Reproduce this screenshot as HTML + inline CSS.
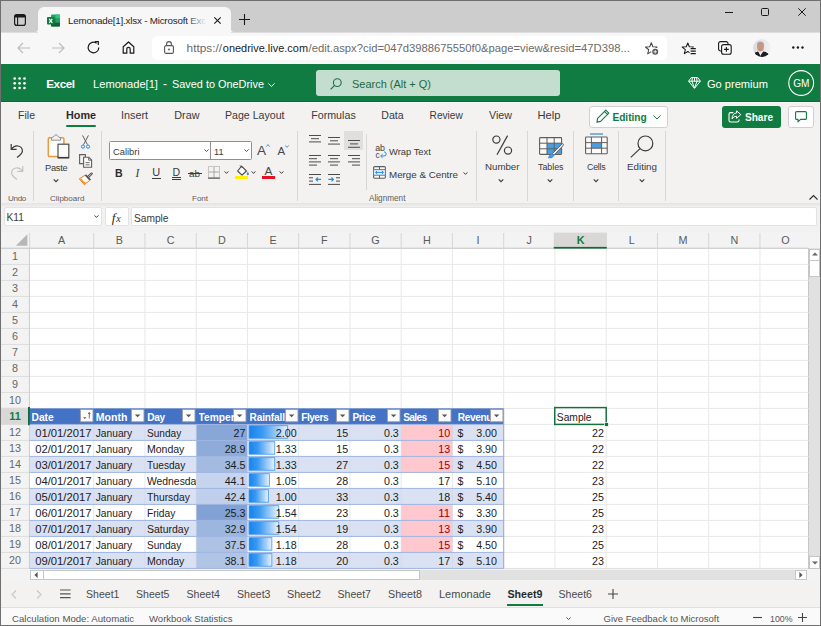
<!DOCTYPE html>
<html><head><meta charset="utf-8"><title>Lemonade[1].xlsx - Microsoft Excel Online</title>
<style>
html,body{margin:0;padding:0;}
body{width:821px;height:626px;overflow:hidden;background:#fff;font-family:"Liberation Sans",sans-serif;}
#root{position:relative;width:821px;height:626px;overflow:hidden;}
.a{position:absolute;box-sizing:border-box;display:block;}
.t{position:absolute;white-space:pre;display:block;line-height:20px;}
svg{overflow:visible;}
</style></head><body><div id="root">
<div class="a" style="left:0px;top:0px;width:821px;height:626px;background:#6f6f6f;"></div>
<div class="a" style="left:1px;top:1px;width:819px;height:32px;background:#cdcdcd;"></div>
<div class="a" style="left:1px;top:32px;width:819px;height:32px;background:#f7f7f7;"></div>
<div class="a" style="left:1px;top:32px;width:819px;height:1px;background:#dedede;"></div>
<div class="a" style="left:38px;top:7px;width:193px;height:26px;background:#f7f7f7;border-radius:6px 6px 0 0;"></div>
<svg class="a" style="left:35px;top:29px;" width="3" height="3" viewBox="0 0 3 3"><path d="M3 0 V3 H0 A3 3 0 0 0 3 0Z" fill="#f7f7f7"/></svg>
<svg class="a" style="left:231px;top:29px;" width="3" height="3" viewBox="0 0 3 3"><path d="M0 0 V3 H3 A3 3 0 0 1 0 0Z" fill="#f7f7f7"/></svg>
<svg class="a" style="left:14px;top:14px;" width="12" height="12" viewBox="0 0 12 12"><rect x="0.6" y="0.6" width="10.8" height="10.8" rx="2.2" fill="none" stroke="#1a1a1a" stroke-width="1.2"/><path d="M0.6 3.6 V2.6 A2 2 0 0 1 2.6 0.6 H9.4 A2 2 0 0 1 11.4 2.6 V3.6Z" fill="#1a1a1a"/><path d="M3.6 2 V11.4" stroke="#1a1a1a" stroke-width="1.1"/></svg>
<svg class="a" style="left:47px;top:13.6px;" width="13" height="13" viewBox="0 0 13 13"><rect x="4" y="0.5" width="9" height="12" rx="1" fill="#21a366"/>
<rect x="4" y="4.5" width="9" height="4" fill="#107c41"/><rect x="4" y="8.5" width="9" height="4" rx="0.8" fill="#185c37"/>
<rect x="8.5" y="0.5" width="4.5" height="4" fill="#33c481"/><rect x="8.5" y="4.5" width="4.5" height="4" fill="#21a366"/>
<rect x="0" y="3" width="7.5" height="7.5" rx="0.8" fill="#107c41"/>
<path d="M2.2 4.8 L5.3 8.8 M5.3 4.8 L2.2 8.8" stroke="#fff" stroke-width="1.2"/></svg>
<span class="t" style="left:68.00px;top:11px;font-size:9.8px;color:#1f1f1f;letter-spacing:-0.198px;">Lemonade[1].xlsx - Microsoft Exc</span>
<div class="a" style="left:186px;top:10px;width:22px;height:18px;background:linear-gradient(90deg,rgba(247,247,247,0),#f7f7f7 95%);"></div>
<svg class="a" style="left:214px;top:17px;" width="7" height="7" viewBox="0 0 7 7"><path d="M0.3 0.3 L6.7 6.7 M6.7 0.3 L0.3 6.7" stroke="#1a1a1a" stroke-width="1.1"/></svg>
<svg class="a" style="left:239px;top:14px;" width="11" height="11" viewBox="0 0 11 11"><path d="M5.5 0 V11 M0 5.5 H11" stroke="#1a1a1a" stroke-width="1.1"/></svg>
<svg class="a" style="left:725px;top:11.5px;" width="8" height="1" viewBox="0 0 8 1"><path d="M0 0.5 H8" stroke="#1a1a1a" stroke-width="1"/></svg>
<svg class="a" style="left:761px;top:8px;" width="8" height="8" viewBox="0 0 8 8"><rect x="0.5" y="0.5" width="7" height="7" rx="1" fill="none" stroke="#1a1a1a" stroke-width="1"/></svg>
<svg class="a" style="left:798px;top:8px;" width="8" height="8" viewBox="0 0 8 8"><path d="M0.3 0.3 L7.7 7.7 M7.7 0.3 L0.3 7.7" stroke="#1a1a1a" stroke-width="1"/></svg>
<svg class="a" style="left:17px;top:42px;" width="13" height="12" viewBox="0 0 13 12"><path d="M13 6 H1 M6 1 L1 6 L6 11" fill="none" stroke="#bdbdbd" stroke-width="1.2"/></svg>
<svg class="a" style="left:52px;top:42px;" width="13" height="12" viewBox="0 0 13 12"><path d="M0 6 H12 M7 1 L12 6 L7 11" fill="none" stroke="#bdbdbd" stroke-width="1.2"/></svg>
<svg class="a" style="left:87px;top:41px;" width="13" height="13" viewBox="0 0 13 13"><path d="M11.8 6.5 A5.3 5.3 0 1 1 9.6 2.2" fill="none" stroke="#1a1a1a" stroke-width="1.2"/><path d="M8 0.6 H11.3 V3.9" fill="none" stroke="#1a1a1a" stroke-width="1.2"/></svg>
<svg class="a" style="left:122px;top:41px;" width="13" height="13" viewBox="0 0 13 13"><path d="M1.2 5.8 L6.5 1 L11.8 5.8 V12.2 H8.2 V8 A1.7 1.7 0 0 0 4.8 8 V12.2 H1.2Z" fill="none" stroke="#1a1a1a" stroke-width="1.2" stroke-linejoin="round"/></svg>
<div class="a" style="left:152px;top:36px;width:515px;height:24px;background:#ffffff;border-radius:5px;"></div>
<svg class="a" style="left:164px;top:41px;" width="10" height="13" viewBox="0 0 10 13"><rect x="0.6" y="4.6" width="8.8" height="7.8" rx="1.5" fill="none" stroke="#555" stroke-width="1.1"/><path d="M2.6 4.6 V3 A2.4 2.4 0 0 1 7.4 3 V4.6" fill="none" stroke="#555" stroke-width="1.1"/><circle cx="5" cy="8.5" r="0.9" fill="#555"/></svg>
<span class="t" style="left:186.60px;top:38px;font-size:11.8px;color:#6b6b6b;">https://</span>
<span class="t" style="left:222.80px;top:38px;font-size:10.95px;color:#1a1a1a;letter-spacing:0.006px;">onedrive.live.com</span>
<span class="t" style="left:308.60px;top:38px;font-size:11.25px;color:#6b6b6b;">/edit.aspx?cid=047d3988675550f0&amp;page=view&amp;resid=47D398...</span>
<svg class="a" style="left:645px;top:42px;" width="14" height="13" viewBox="0 0 14 13"><path d="M6.30 0.80 L7.89 4.72 L12.10 5.01 L8.87 7.73 L9.89 11.84 L6.30 9.60 L2.71 11.84 L3.73 7.73 L0.50 5.01 L4.71 4.72Z" fill="none" stroke="#444" stroke-width="1.05" stroke-linejoin="round"/><circle cx="10.2" cy="9.8" r="4" fill="#fff"/><circle cx="10.2" cy="9.8" r="3" fill="#555"/><path d="M10.2 8.1 V11.5 M8.5 9.8 H11.9" stroke="#fff" stroke-width="0.9"/></svg>
<svg class="a" style="left:682px;top:42px;" width="14" height="13" viewBox="0 0 14 13"><path d="M5.80 1.00 L7.33 4.80 L11.41 5.08 L8.27 7.70 L9.27 11.67 L5.80 9.50 L2.33 11.67 L3.33 7.70 L0.19 5.08 L4.27 4.80Z" fill="none" stroke="#1a1a1a" stroke-width="1.05" stroke-linejoin="round"/><rect x="7.6" y="5.6" width="7" height="8" fill="#f7f7f7"/><path d="M8.6 6.6 H13.8 M8.6 9.1 H13.8 M8.6 11.6 H13.8" stroke="#1a1a1a" stroke-width="1.05"/></svg>
<svg class="a" style="left:718px;top:41px;" width="14" height="14" viewBox="0 0 14 14"><rect x="3.6" y="3.6" width="9.6" height="9.6" rx="2" fill="#f7f7f7" stroke="#1a1a1a" stroke-width="1.1"/><path d="M3.4 10 H2.6 A2 2 0 0 1 0.6 8 V2.6 A2 2 0 0 1 2.6 0.6 H8 A2 2 0 0 1 10 2.6 V3.4" fill="none" stroke="#1a1a1a" stroke-width="1.1"/><path d="M8.4 6 V10.8 M6 8.4 H10.8" stroke="#1a1a1a" stroke-width="1.1"/></svg>
<svg class="a" style="left:752.7px;top:38.8px;" width="18" height="18" viewBox="0 0 18 18"><defs><clipPath id="av"><circle cx="9" cy="9" r="9"/></clipPath><linearGradient id="avbg" x1="0" x2="1"><stop offset="0" stop-color="#dcdcdf"/><stop offset="1" stop-color="#f1f1f3"/></linearGradient></defs><g clip-path="url(#av)"><rect width="18" height="18" fill="url(#avbg)"/><path d="M-1 18 Q0.5 13.2 5 12.6 L7.6 15.6 L10.4 12.4 Q15.5 13 17.5 18Z" fill="#1c1c22"/><path d="M5.4 12.4 L7.4 17 L9.6 12.6Z" fill="#ececec"/><ellipse cx="7.5" cy="7.8" rx="3.5" ry="4.6" fill="#c9977f"/><path d="M3.9 7 Q3.6 2.6 7.6 2.4 Q11.4 2.6 11.1 7 Q10.4 4.4 7.5 4.5 Q4.6 4.4 3.9 7Z" fill="#a9a4a0"/><path d="M5.6 10.4 Q7.5 12.6 9.4 10.4 Q7.5 11.3 5.6 10.4Z" fill="#9a8a82"/></g></svg>
<svg class="a" style="left:792.4px;top:46.3px;" width="12" height="3" viewBox="0 0 12 3"><circle cx="1.3" cy="1.5" r="1.2" fill="#1a1a1a"/><circle cx="5.9" cy="1.5" r="1.2" fill="#1a1a1a"/><circle cx="10.5" cy="1.5" r="1.2" fill="#1a1a1a"/></svg>
<div class="a" style="left:1px;top:64px;width:819px;height:38px;background:#107c41;"></div>
<svg class="a" style="left:13px;top:76.6px;" width="13.2" height="12.8" viewBox="0 0 13.2 12.8"><circle cx="1.7" cy="1.5" r="1.35" fill="#fff"/><circle cx="1.7" cy="6.3" r="1.35" fill="#fff"/><circle cx="1.7" cy="11.0" r="1.35" fill="#fff"/><circle cx="6.6" cy="1.5" r="1.35" fill="#fff"/><circle cx="6.6" cy="6.3" r="1.35" fill="#fff"/><circle cx="6.6" cy="11.0" r="1.35" fill="#fff"/><circle cx="11.5" cy="1.5" r="1.35" fill="#fff"/><circle cx="11.5" cy="6.3" r="1.35" fill="#fff"/><circle cx="11.5" cy="11.0" r="1.35" fill="#fff"/></svg>
<span class="t" style="left:46.30px;top:74px;font-size:11.65px;color:#fff;font-weight:bold;letter-spacing:-0.449px;">Excel</span>
<span class="t" style="left:93.00px;top:74px;font-size:11.15px;color:#fff;letter-spacing:-0.008px;">Lemonade[1]</span>
<span class="t" style="left:163.00px;top:74px;font-size:12px;color:#fff;">-</span>
<span class="t" style="left:172.00px;top:74px;font-size:10.9px;color:#fff;letter-spacing:-0.005px;">Saved to OneDrive</span>
<svg class="a" style="left:268px;top:82.5px;" width="7" height="4" viewBox="0 0 7 4"><path d="M0.4 0.4 L3.5 3.4 L6.6 0.4" fill="none" stroke="#fff" stroke-width="1"/></svg>
<div class="a" style="left:316px;top:70px;width:244px;height:26px;background:#c3decf;border-radius:3px;"></div>
<svg class="a" style="left:330px;top:78px;" width="12" height="12" viewBox="0 0 12 12"><circle cx="7.3" cy="4.6" r="3.9" fill="none" stroke="#1e6e44" stroke-width="1.1"/><path d="M4.6 7.4 L0.6 11.4" stroke="#1e6e44" stroke-width="1.2"/></svg>
<span class="t" style="left:352.00px;top:74px;font-size:11px;color:#1d6a41;letter-spacing:-0.010px;">Search (Alt + Q)</span>
<svg class="a" style="left:687.6px;top:76.8px;" width="13" height="12" viewBox="0 0 13 12"><path d="M3.2 0.6 H9.8 L12.4 4.2 L6.5 11.4 L0.6 4.2 Z M0.6 4.2 H12.4 M4.4 0.8 L3.9 4.2 L6.5 11 L9.1 4.2 L8.6 0.8 M6.5 0.6 V4.2" fill="none" stroke="#fff" stroke-width="1" stroke-linejoin="round"/></svg>
<span class="t" style="left:707.00px;top:74px;font-size:11.1px;color:#fff;letter-spacing:-0.007px;">Go premium</span>
<svg class="a" style="left:788px;top:70px;" width="27" height="27" viewBox="0 0 27 27"><circle cx="13.2" cy="13" r="12.4" fill="none" stroke="#fff" stroke-width="1.1"/></svg>
<span class="t" style="left:793.25px;top:74px;font-size:10.1px;color:#fff;letter-spacing:0.015px;">GM</span>
<div class="a" style="left:1px;top:102px;width:819px;height:101px;background:#f3f2f1;"></div>
<div class="a" style="left:1px;top:101px;width:819px;height:1px;background:#0c6b38;"></div>
<div class="a" style="left:1px;top:102px;width:819px;height:1px;background:#fbfbfa;"></div>
<span class="t" style="left:18.00px;top:105px;font-size:10.55px;color:#3a3a3a;">File</span>
<span class="t" style="left:66.00px;top:105px;font-size:10.8px;color:#2b2b2b;font-weight:bold;">Home</span>
<span class="t" style="left:121.00px;top:105px;font-size:10.8px;color:#3a3a3a;">Insert</span>
<span class="t" style="left:174.30px;top:105px;font-size:10.8px;color:#3a3a3a;">Draw</span>
<span class="t" style="left:225.00px;top:105px;font-size:10.6px;color:#3a3a3a;letter-spacing:0.007px;">Page Layout</span>
<span class="t" style="left:311.20px;top:105px;font-size:10.7px;color:#3a3a3a;">Formulas</span>
<span class="t" style="left:381.30px;top:105px;font-size:10.55px;color:#3a3a3a;">Data</span>
<span class="t" style="left:429.60px;top:106px;font-size:10.15px;color:#3a3a3a;letter-spacing:-0.013px;">Review</span>
<span class="t" style="left:489.00px;top:105px;font-size:10.7px;color:#3a3a3a;">View</span>
<span class="t" style="left:537.40px;top:105px;font-size:11.2px;color:#3a3a3a;letter-spacing:-0.009px;">Help</span>
<div class="a" style="left:66px;top:125px;width:30px;height:2px;background:#107c41;border-radius:1px;"></div>
<div class="a" style="left:589px;top:106px;width:78.5px;height:21.5px;background:#fff;border:1px solid #d2d0ce;border-radius:3px;"></div>
<svg class="a" style="left:596px;top:109px;" width="14" height="14" viewBox="0 0 14 14"><path d="M9.8 1.2 L12.8 4.2 L4.6 12.4 L0.9 13.1 L1.6 9.4 Z M8.6 2.6 L11.4 5.4" fill="none" stroke="#107c41" stroke-width="1.1" stroke-linejoin="round"/></svg>
<span class="t" style="left:612.40px;top:108px;font-size:10.15px;color:#107c41;font-weight:bold;">Editing</span>
<svg class="a" style="left:653px;top:115px;" width="8" height="5" viewBox="0 0 8 5"><path d="M0.4 0.5 L4 4 L7.6 0.5" fill="none" stroke="#107c41" stroke-width="1"/></svg>
<div class="a" style="left:722px;top:106px;width:58.5px;height:21.5px;background:#107c41;border-radius:3px;"></div>
<svg class="a" style="left:728px;top:110px;" width="14" height="13" viewBox="0 0 14 13"><path d="M5.4 2.6 H2.6 A1.6 1.6 0 0 0 1 4.2 V10.4 A1.6 1.6 0 0 0 2.6 12 H9.4 A1.6 1.6 0 0 0 11 10.4 V9.6" fill="none" stroke="#fff" stroke-width="1.1"/><path d="M8.6 0.8 L12.8 4.6 L8.6 8.4 V6.2 Q5.2 6.2 4 9 Q4.2 3.4 8.6 3 Z" fill="none" stroke="#fff" stroke-width="1" stroke-linejoin="round"/></svg>
<span class="t" style="left:745.00px;top:108px;font-size:10.1px;color:#fff;font-weight:bold;letter-spacing:-0.014px;">Share</span>
<div class="a" style="left:787.6px;top:106px;width:26px;height:21.5px;background:#fff;border:1px solid #d2d0ce;border-radius:3px;"></div>
<svg class="a" style="left:795px;top:111px;" width="12" height="11.5" viewBox="0 0 12 11.5"><path d="M1.6 0.6 H10.4 A1 1 0 0 1 11.4 1.6 V7.4 A1 1 0 0 1 10.4 8.4 H5.6 L3 10.8 V8.4 H1.6 A1 1 0 0 1 0.6 7.4 V1.6 A1 1 0 0 1 1.6 0.6Z" fill="none" stroke="#107c41" stroke-width="1.1" stroke-linejoin="round"/></svg>
<div class="a" style="left:33px;top:131px;width:1px;height:70px;background:#d9d7d5;"></div>
<div class="a" style="left:101px;top:131px;width:1px;height:70px;background:#d9d7d5;"></div>
<div class="a" style="left:297px;top:131px;width:1px;height:70px;background:#d9d7d5;"></div>
<div class="a" style="left:476px;top:131px;width:1px;height:70px;background:#d9d7d5;"></div>
<div class="a" style="left:527px;top:131px;width:1px;height:70px;background:#d9d7d5;"></div>
<div class="a" style="left:573px;top:131px;width:1px;height:70px;background:#d9d7d5;"></div>
<div class="a" style="left:618px;top:131px;width:1px;height:70px;background:#d9d7d5;"></div>
<div class="a" style="left:665px;top:131px;width:1px;height:70px;background:#d9d7d5;"></div>
<span class="t" style="left:8.00px;top:189px;font-size:8.05px;color:#5c5c5c;letter-spacing:-0.311px;">Undo</span>
<span class="t" style="left:50.00px;top:189px;font-size:8.05px;color:#5c5c5c;">Clipboard</span>
<span class="t" style="left:192.00px;top:189px;font-size:8.05px;color:#5c5c5c;letter-spacing:-0.027px;">Font</span>
<span class="t" style="left:369.00px;top:189px;font-size:8.2px;color:#5c5c5c;">Alignment</span>
<svg class="a" style="left:10px;top:143px;" width="14" height="15" viewBox="0 0 14 15"><path d="M1.2 1 V6.4 H6.6" fill="none" stroke="#3b3b3b" stroke-width="1.2"/><path d="M1.4 6.2 Q4 2.4 8 3 Q12.6 4 12.4 8.2 Q12 11.2 7 14.4" fill="none" stroke="#3b3b3b" stroke-width="1.2"/></svg>
<svg class="a" style="left:10px;top:165px;" width="14" height="15" viewBox="0 0 14 15"><path d="M12.8 1 V6.4 H7.4" fill="none" stroke="#c4c2c0" stroke-width="1.2"/><path d="M12.6 6.2 Q10 2.4 6 3 Q1.4 4 1.6 8.2 Q2 11.2 7 14.4" fill="none" stroke="#c4c2c0" stroke-width="1.2"/></svg>
<svg class="a" style="left:47px;top:134px;" width="23" height="25" viewBox="0 0 23 25"><rect x="1.3" y="3.8" width="15.6" height="18.6" rx="1.2" fill="#fdfdfd" stroke="#ea9a3c" stroke-width="1.5"/>
<path d="M4.4 6.2 V3.4 H5.6 L9 0.6 L12.4 3.4 H13.6 V6.2Z" fill="#f3f2f1" stroke="#8a8886" stroke-width="0.9" stroke-linejoin="round"/>
<rect x="11" y="10.2" width="10.8" height="13.6" fill="#fbfbfb" stroke="#4f4d4b" stroke-width="1.2"/><path d="M11 23.6 H21.8" stroke="#3b3b3b" stroke-width="1.4"/></svg>
<span class="t" style="left:45.00px;top:158px;font-size:9.25px;color:#3a3a3a;letter-spacing:-0.231px;">Paste</span>
<svg class="a" style="left:53px;top:179px;" width="6" height="4" viewBox="0 0 6 4"><path d="M0.7 0.4 L3 2.7 L5.3 0.4" fill="none" stroke="#3b3b3b" stroke-width="1.1"/></svg>
<svg class="a" style="left:81px;top:135px;" width="9" height="14" viewBox="0 0 9 14"><path d="M1.6 0.4 L6.4 9.6 M7.4 0.4 L2.6 9.6" stroke="#605e5c" stroke-width="1"/><circle cx="2" cy="11.6" r="1.6" fill="none" stroke="#2a8ad4" stroke-width="1"/><circle cx="7" cy="11.6" r="1.6" fill="none" stroke="#2a8ad4" stroke-width="1"/></svg>
<svg class="a" style="left:79px;top:154px;" width="14" height="14" viewBox="0 0 14 14"><path d="M4 9.6 H0.6 V0.6 H6.4 V3" fill="none" stroke="#605e5c" stroke-width="1.1"/><path d="M4.6 3.2 H9.8 L12.6 6 V13.2 H4.6Z" fill="#fafafa" stroke="#605e5c" stroke-width="1.1"/><path d="M9.6 3.4 V6.2 H12.4 M6.6 8.6 H10.6 M6.6 10.8 H10.6" fill="none" stroke="#605e5c" stroke-width="0.9"/></svg>
<svg class="a" style="left:79px;top:172px;" width="14" height="14" viewBox="0 0 14 14"><path d="M0.3 6.8 L6 3.3 L10.7 8.4 L5.3 12.7 Z" fill="#fdfdfd" stroke="#e8730c" stroke-width="0.95" stroke-linejoin="round"/><path d="M1.2 7.3 L5.3 12 L6.8 10.8 Q3.8 9.8 2.6 6.5Z" fill="#f08a24"/><path d="M6.5 2.7 L11.4 8" stroke="#4a4846" stroke-width="1.4"/><path d="M9.3 4.9 L12.6 1.7" stroke="#4a4846" stroke-width="2.4" stroke-linecap="round"/><path d="M9.5 4.7 L12.4 1.9" stroke="#f3f2f1" stroke-width="0.8" stroke-linecap="round"/></svg>
<div class="a" style="left:108.5px;top:141.2px;width:143.4px;height:18.6px;background:#fff;border:1px solid #918f8d;border-radius:1.5px;"></div>
<div class="a" style="left:210px;top:142px;width:1px;height:17px;background:#918f8d;"></div>
<span class="t" style="left:113.00px;top:142px;font-size:9.35px;color:#3a3a3a;">Calibri</span>
<svg class="a" style="left:203.5px;top:149px;" width="5" height="3.2" viewBox="0 0 5 3.2"><path d="M0.4 0.4 L2.5 2.6 L4.6 0.4" fill="none" stroke="#444" stroke-width="0.9"/></svg>
<span class="t" style="left:214.00px;top:142px;font-size:9.15px;color:#3a3a3a;">11</span>
<svg class="a" style="left:244px;top:149px;" width="5" height="3.2" viewBox="0 0 5 3.2"><path d="M0.4 0.4 L2.5 2.6 L4.6 0.4" fill="none" stroke="#444" stroke-width="0.9"/></svg>
<span class="t" style="left:257.00px;top:141px;font-size:13.6px;color:#484848;">A</span>
<svg class="a" style="left:266px;top:144.3px;" width="4" height="3" viewBox="0 0 4 3"><path d="M0.3 2.6 L2 0.6 L3.7 2.6" fill="none" stroke="#2a8ad4" stroke-width="0.9"/></svg>
<span class="t" style="left:277.60px;top:141px;font-size:11.4px;color:#484848;">A</span>
<svg class="a" style="left:284.6px;top:144.6px;" width="4" height="3" viewBox="0 0 4 3"><path d="M0.3 0.4 L2 2.4 L3.7 0.4" fill="none" stroke="#2a8ad4" stroke-width="0.9"/></svg>
<span class="t" style="left:115.00px;top:163px;font-size:10.6px;color:#2b2b2b;font-weight:bold;">B</span>
<span class="t" style="left:135.50px;top:163px;font-size:11.5px;color:#3a3a3a;font-style:italic;font-family:'Liberation Serif',serif;">I</span>
<span class="t" style="left:152.30px;top:162px;font-size:11px;color:#3a3a3a;">U</span>
<div class="a" style="left:152px;top:178px;width:8.5px;height:1px;background:#3a3a3a;"></div>
<span class="t" style="left:172.60px;top:162px;font-size:10.6px;color:#3a3a3a;">D</span>
<div class="a" style="left:172px;top:177.4px;width:8.5px;height:0.9px;background:#3a3a3a;"></div>
<div class="a" style="left:172px;top:179.2px;width:8.5px;height:0.9px;background:#3a3a3a;"></div>
<span class="t" style="left:189.00px;top:164px;font-size:9.9px;color:#3a3a3a;letter-spacing:-0.006px;">ab</span>
<div class="a" style="left:187.5px;top:173px;width:14px;height:1px;background:#3a3a3a;"></div>
<svg class="a" style="left:208px;top:165.6px;" width="12" height="13" viewBox="0 0 12 13"><rect x="0.5" y="0.5" width="11" height="11" fill="none" stroke="#8f8d8b" stroke-width="0.9" stroke-dasharray="1 1"/><path d="M6 1 V11.5 M1 6 H11" stroke="#a09e9c" stroke-width="0.9"/><path d="M0 12.2 H12" stroke="#605e5c" stroke-width="1.2"/></svg>
<svg class="a" style="left:224px;top:171px;" width="5" height="3.2" viewBox="0 0 5 3.2"><path d="M0.6 0.4 L2.5 2.4 L4.4 0.4" fill="none" stroke="#3b3b3b" stroke-width="1"/></svg>
<svg class="a" style="left:235.6px;top:165px;" width="14" height="12" viewBox="0 0 14 12"><path d="M5.6 1.2 L10.4 6 L6 10.2 L1.6 6 Z" fill="#fafafa" stroke="#4a4a4a" stroke-width="1.1" stroke-linejoin="round"/><path d="M4 0.4 L6.6 3" stroke="#4a4a4a" stroke-width="1"/><path d="M11.8 6.4 Q13.4 8.8 12.6 9.8 Q11.8 10.6 11 9.8 Q10.4 8.8 11.8 6.4Z" fill="#2a8ad4"/></svg>
<div class="a" style="left:235px;top:176.2px;width:13px;height:3px;background:#fff100;"></div>
<svg class="a" style="left:251px;top:171px;" width="5" height="3.2" viewBox="0 0 5 3.2"><path d="M0.6 0.4 L2.5 2.4 L4.4 0.4" fill="none" stroke="#3b3b3b" stroke-width="1"/></svg>
<span class="t" style="left:264.60px;top:161px;font-size:11.8px;color:#484848;">A</span>
<div class="a" style="left:262.3px;top:176.2px;width:12.7px;height:3px;background:#e81123;"></div>
<svg class="a" style="left:278.5px;top:171px;" width="5" height="3.2" viewBox="0 0 5 3.2"><path d="M0.6 0.4 L2.5 2.4 L4.4 0.4" fill="none" stroke="#3b3b3b" stroke-width="1"/></svg>
<div class="a" style="left:344px;top:131px;width:19px;height:19px;background:#e1dfdd;"></div>
<svg class="a" style="left:309px;top:134.7px;" width="12" height="9.6" viewBox="0 0 12 9.6"><path d="M0.0 0.5 H12.0" stroke="#4a4a4a" stroke-width="1"/><path d="M2.0 3.7 H10.0" stroke="#4a4a4a" stroke-width="1"/><path d="M0.0 6.9 H12.0" stroke="#4a4a4a" stroke-width="1"/></svg>
<svg class="a" style="left:328px;top:136.9px;" width="12" height="9.9" viewBox="0 0 12 9.9"><path d="M0.0 0.5 H12.0" stroke="#4a4a4a" stroke-width="1"/><path d="M2.0 3.8 H10.0" stroke="#4a4a4a" stroke-width="1"/><path d="M0.0 7.1 H12.0" stroke="#4a4a4a" stroke-width="1"/></svg>
<svg class="a" style="left:347.5px;top:139.9px;" width="12" height="10.2" viewBox="0 0 12 10.2"><path d="M0.0 0.5 H12.0" stroke="#4a4a4a" stroke-width="1"/><path d="M2.0 3.9 H10.0" stroke="#4a4a4a" stroke-width="1"/><path d="M0.0 7.3 H12.0" stroke="#4a4a4a" stroke-width="1"/></svg>
<svg class="a" style="left:309px;top:154.5px;" width="12" height="12.8" viewBox="0 0 12 12.8"><path d="M0 0.5 H12" stroke="#4a4a4a" stroke-width="1"/><path d="M0 3.7 H8" stroke="#4a4a4a" stroke-width="1"/><path d="M0 6.9 H12" stroke="#4a4a4a" stroke-width="1"/><path d="M0 10.100000000000001 H8" stroke="#4a4a4a" stroke-width="1"/></svg>
<svg class="a" style="left:328px;top:154.5px;" width="12" height="12.8" viewBox="0 0 12 12.8"><path d="M0.0 0.5 H12.0" stroke="#4a4a4a" stroke-width="1"/><path d="M2.0 3.7 H10.0" stroke="#4a4a4a" stroke-width="1"/><path d="M0.0 6.9 H12.0" stroke="#4a4a4a" stroke-width="1"/><path d="M2.0 10.100000000000001 H10.0" stroke="#4a4a4a" stroke-width="1"/></svg>
<svg class="a" style="left:347.5px;top:154.5px;" width="12" height="12.8" viewBox="0 0 12 12.8"><path d="M0 0.5 H12" stroke="#4a4a4a" stroke-width="1"/><path d="M4 3.7 H12" stroke="#4a4a4a" stroke-width="1"/><path d="M0 6.9 H12" stroke="#4a4a4a" stroke-width="1"/><path d="M4 10.100000000000001 H12" stroke="#4a4a4a" stroke-width="1"/></svg>
<svg class="a" style="left:309px;top:174px;" width="13" height="12" viewBox="0 0 13 12"><path d="M0 0.5 H12 M0 3.8 H4 M0 7.1 H4 M0 10.4 H12" stroke="#4a4a4a" stroke-width="1"/><path d="M12 5.4 H7 M8.9 3.5 L7 5.4 L8.9 7.3" fill="none" stroke="#2a8ad4" stroke-width="1.1"/></svg>
<svg class="a" style="left:328px;top:174px;" width="13" height="12" viewBox="0 0 13 12"><path d="M0 0.5 H12 M8 3.8 H12 M8 7.1 H12 M0 10.4 H12" stroke="#4a4a4a" stroke-width="1"/><path d="M0.4 5.4 H5.4 M3.5 3.5 L5.4 5.4 L3.5 7.3" fill="none" stroke="#2a8ad4" stroke-width="1.1"/></svg>
<div class="a" style="left:366.3px;top:134px;width:1px;height:56px;background:#d9d7d5;"></div>
<span class="t" style="left:375.20px;top:138px;font-size:8.8px;color:#3a3a3a;letter-spacing:0.006px;">ab</span>
<span class="t" style="left:375.60px;top:146px;font-size:8.2px;color:#3a3a3a;">c</span>
<svg class="a" style="left:378.6px;top:151px;" width="8" height="7" viewBox="0 0 8 7"><path d="M2.2 5 H5 Q7.4 5 7.2 2.8 Q7 1 5 0.8" fill="none" stroke="#2a8ad4" stroke-width="1"/><path d="M3.6 3.2 L1.6 5 L3.6 6.8" fill="none" stroke="#2a8ad4" stroke-width="1"/></svg>
<span class="t" style="left:389.00px;top:142px;font-size:9.4px;color:#3a3a3a;">Wrap Text</span>
<svg class="a" style="left:373px;top:166px;" width="13" height="13" viewBox="0 0 13 13"><rect x="0.6" y="0.6" width="11.8" height="11.6" rx="1.2" fill="#f8f8f8" stroke="#605e5c" stroke-width="1.1"/><path d="M6.5 0.6 V12.2" stroke="#605e5c" stroke-width="1"/><rect x="0.6" y="3.6" width="11.8" height="5.6" fill="#eaf3fb" stroke="#2a8ad4" stroke-width="1"/><path d="M2.6 6.4 H10.4 M4.2 4.9 L2.6 6.4 L4.2 7.9 M8.8 4.9 L10.4 6.4 L8.8 7.9" fill="none" stroke="#2a8ad4" stroke-width="1"/></svg>
<span class="t" style="left:389.00px;top:165px;font-size:9.8px;color:#3a3a3a;letter-spacing:-0.012px;">Merge &amp; Centre</span>
<svg class="a" style="left:462.5px;top:171.5px;" width="5" height="3.2" viewBox="0 0 5 3.2"><path d="M0.6 0.4 L2.5 2.4 L4.4 0.4" fill="none" stroke="#3b3b3b" stroke-width="1"/></svg>
<svg class="a" style="left:492px;top:135px;" width="21" height="21" viewBox="0 0 21 21"><circle cx="4.4" cy="4.6" r="3.6" fill="none" stroke="#3b3b3b" stroke-width="1.2"/><circle cx="16" cy="15.6" r="3.6" fill="none" stroke="#3b3b3b" stroke-width="1.2"/><path d="M15.6 0.6 L5 19.8" stroke="#3b3b3b" stroke-width="1.2"/></svg>
<span class="t" style="left:485.00px;top:157px;font-size:9.7px;color:#3a3a3a;">Number</span>
<svg class="a" style="left:498.3px;top:179px;" width="6" height="4" viewBox="0 0 6 4"><path d="M0.7 0.4 L3 2.7 L5.3 0.4" fill="none" stroke="#3b3b3b" stroke-width="1.1"/></svg>
<svg class="a" style="left:539px;top:137px;" width="25" height="22" viewBox="0 0 25 22"><rect x="0.6" y="0.6" width="22" height="16.8" rx="0.8" fill="#fafafa" stroke="#605e5c" stroke-width="1.1"/><rect x="8" y="6.2" width="14.2" height="10.8" fill="#4a9de0"/><path d="M0.6 6.2 H22.6 M0.6 11.8 H22.6 M8 0.6 V17.4 M15.2 0.6 V17.4" stroke="#605e5c" stroke-width="1"/><path d="M23.6 6.4 L13.4 16.6 L15 18.2 L24.6 8Z" fill="#f3f2f1" stroke="#605e5c" stroke-width="0.9"/><path d="M13.2 16.6 Q10.4 17 9.4 21 Q13.6 21.6 15.2 18.4Z" fill="#4a9de0" stroke="#2f7fc4" stroke-width="0.6"/></svg>
<span class="t" style="left:538.00px;top:157px;font-size:8.9px;color:#3a3a3a;letter-spacing:-0.038px;">Tables</span>
<svg class="a" style="left:547.2px;top:179px;" width="6" height="4" viewBox="0 0 6 4"><path d="M0.7 0.4 L3 2.7 L5.3 0.4" fill="none" stroke="#3b3b3b" stroke-width="1.1"/></svg>
<svg class="a" style="left:585px;top:133px;" width="23" height="22" viewBox="0 0 23 22"><path d="M5 1 H18" stroke="#2a8ad4" stroke-width="1.2"/><rect x="0.6" y="4" width="21.6" height="16.8" rx="0.8" fill="#fafafa" stroke="#605e5c" stroke-width="1.1"/><rect x="6.4" y="9.6" width="10.2" height="5.6" fill="#4a9de0"/><path d="M0.6 9.6 H22.2 M0.6 15.2 H22.2 M6.4 4 V20.8 M16.6 4 V20.8" stroke="#605e5c" stroke-width="1"/></svg>
<span class="t" style="left:587.00px;top:157px;font-size:8.9px;color:#3a3a3a;letter-spacing:-0.256px;">Cells</span>
<svg class="a" style="left:592.8px;top:179px;" width="6" height="4" viewBox="0 0 6 4"><path d="M0.7 0.4 L3 2.7 L5.3 0.4" fill="none" stroke="#3b3b3b" stroke-width="1.1"/></svg>
<svg class="a" style="left:630px;top:135px;" width="24" height="23" viewBox="0 0 24 23"><circle cx="15.4" cy="8.4" r="7.4" fill="none" stroke="#3b3b3b" stroke-width="1.2"/><path d="M10 13.6 L0.8 22.4" stroke="#3b3b3b" stroke-width="1.2"/></svg>
<span class="t" style="left:627.00px;top:157px;font-size:9.8px;color:#3a3a3a;letter-spacing:0.005px;">Editing</span>
<svg class="a" style="left:638.6px;top:179px;" width="6" height="4" viewBox="0 0 6 4"><path d="M0.7 0.4 L3 2.7 L5.3 0.4" fill="none" stroke="#3b3b3b" stroke-width="1.1"/></svg>
<svg class="a" style="left:809px;top:194.5px;" width="9" height="5" viewBox="0 0 9 5"><path d="M0.5 4.5 L4.5 0.6 L8.5 4.5" fill="none" stroke="#2b2b2b" stroke-width="1.1"/></svg>
<div class="a" style="left:1px;top:203px;width:819px;height:45px;background:#f1f1f1;"></div>
<div class="a" style="left:1px;top:203px;width:819px;height:4px;background:linear-gradient(#e3e3e3,#f0f0f0);"></div>
<div class="a" style="left:3.5px;top:207.4px;width:98px;height:19px;background:#fff;border:1px solid #e3e3e3;border-radius:2px;"></div>
<div class="a" style="left:104.6px;top:207.4px;width:24px;height:19px;background:#fff;border:1px solid #e3e3e3;border-radius:2px;"></div>
<div class="a" style="left:131.4px;top:207.4px;width:685.6px;height:19px;background:#fff;border:1px solid #e3e3e3;border-radius:2px;"></div>
<span class="t" style="left:6.50px;top:208px;font-size:10.25px;color:#3a3a3a;letter-spacing:0.008px;">K11</span>
<svg class="a" style="left:93.5px;top:215.4px;" width="5" height="3.2" viewBox="0 0 5 3.2"><path d="M0.6 0.4 L2.5 2.4 L4.4 0.4" fill="none" stroke="#3b3b3b" stroke-width="1"/></svg>
<span class="t" style="left:111.80px;top:208px;font-size:13.5px;color:#2b2b2b;font-style:italic;font-family:'Liberation Serif',serif;">f</span>
<span class="t" style="left:116.20px;top:209px;font-size:10px;color:#2b2b2b;font-style:italic;font-family:'Liberation Serif',serif;">x</span>
<span class="t" style="left:134.00px;top:209px;font-size:10.2px;color:#3a3a3a;letter-spacing:-0.014px;">Sample</span>
<svg class="a" style="left:0;top:0" width="821" height="626" viewBox="0 0 821 626"><rect x="29.7" y="248.4" width="778.9" height="320.0" fill="#fff"/><rect x="1" y="232" width="819" height="16.400000000000006" fill="#f3f3f3"/><rect x="1" y="248.4" width="28.7" height="333.6" fill="#f3f3f3"/><rect x="553.75" y="232.6" width="53.05" height="15.800000000000011" fill="#dad8d6"/><rect x="1" y="407.79999999999995" width="28.7" height="16.8" fill="#dad8d6"/><path d="M27.4 234.2 V245.8 H15.8Z" fill="#b7b7b7"/><rect x="29.7" y="408.4" width="474.0" height="16.0" fill="#4472c4"/><rect x="29.7" y="424.4" width="474.0" height="16.0" fill="#d9e1f2"/><rect x="29.7" y="456.4" width="474.0" height="16.0" fill="#d9e1f2"/><rect x="29.7" y="488.4" width="474.0" height="16.0" fill="#d9e1f2"/><rect x="29.7" y="520.4" width="474.0" height="16.0" fill="#d9e1f2"/><rect x="29.7" y="552.4" width="474.0" height="16.0" fill="#d9e1f2"/><rect x="196.2" y="424.4" width="51.25" height="16.0" fill="#88a6d7"/><rect x="196.2" y="440.4" width="51.25" height="16.0" fill="#8fabda"/><rect x="196.2" y="456.4" width="51.25" height="16.0" fill="#a3bae1"/><rect x="196.2" y="472.4" width="51.25" height="16.0" fill="#c6d4ed"/><rect x="196.2" y="488.4" width="51.25" height="16.0" fill="#c0cfeb"/><rect x="196.2" y="504.4" width="51.25" height="16.0" fill="#82a1d5"/><rect x="196.2" y="520.4" width="51.25" height="16.0" fill="#9db6df"/><rect x="196.2" y="536.4" width="51.25" height="16.0" fill="#aec2e5"/><rect x="196.2" y="552.4" width="51.25" height="16.0" fill="#b0c4e5"/><rect x="401.2" y="424.4" width="51.25" height="16.0" fill="#ffc7ce"/><rect x="401.2" y="440.4" width="51.25" height="16.0" fill="#ffc7ce"/><rect x="401.2" y="456.4" width="51.25" height="16.0" fill="#ffc7ce"/><rect x="401.2" y="504.4" width="51.25" height="16.0" fill="#ffc7ce"/><rect x="401.2" y="520.4" width="51.25" height="16.0" fill="#ffc7ce"/><rect x="401.2" y="536.4" width="51.25" height="16.0" fill="#ffc7ce"/><path d="M29.7 264.4 H808.6" stroke="#e8e8e8" stroke-width="1"/><path d="M29.7 280.4 H808.6" stroke="#e8e8e8" stroke-width="1"/><path d="M29.7 296.4 H808.6" stroke="#e8e8e8" stroke-width="1"/><path d="M29.7 312.4 H808.6" stroke="#e8e8e8" stroke-width="1"/><path d="M29.7 328.4 H808.6" stroke="#e8e8e8" stroke-width="1"/><path d="M29.7 344.4 H808.6" stroke="#e8e8e8" stroke-width="1"/><path d="M29.7 360.4 H808.6" stroke="#e8e8e8" stroke-width="1"/><path d="M29.7 376.4 H808.6" stroke="#e8e8e8" stroke-width="1"/><path d="M29.7 392.4 H808.6" stroke="#e8e8e8" stroke-width="1"/><path d="M29.7 408.4 H808.6" stroke="#e8e8e8" stroke-width="1"/><path d="M29.7 424.4 H808.6" stroke="#e8e8e8" stroke-width="1"/><path d="M29.7 440.4 H808.6" stroke="#e8e8e8" stroke-width="1"/><path d="M29.7 456.4 H808.6" stroke="#e8e8e8" stroke-width="1"/><path d="M29.7 472.4 H808.6" stroke="#e8e8e8" stroke-width="1"/><path d="M29.7 488.4 H808.6" stroke="#e8e8e8" stroke-width="1"/><path d="M29.7 504.4 H808.6" stroke="#e8e8e8" stroke-width="1"/><path d="M29.7 520.4 H808.6" stroke="#e8e8e8" stroke-width="1"/><path d="M29.7 536.4 H808.6" stroke="#e8e8e8" stroke-width="1"/><path d="M29.7 552.4 H808.6" stroke="#e8e8e8" stroke-width="1"/><path d="M29.7 568.4 H808.6" stroke="#e8e8e8" stroke-width="1"/><path d="M93.7 248.4 V568.4" stroke="#e8e8e8" stroke-width="1"/><path d="M144.95 248.4 V568.4" stroke="#e8e8e8" stroke-width="1"/><path d="M196.2 248.4 V568.4" stroke="#e8e8e8" stroke-width="1"/><path d="M247.45 248.4 V568.4" stroke="#e8e8e8" stroke-width="1"/><path d="M298.7 248.4 V568.4" stroke="#e8e8e8" stroke-width="1"/><path d="M349.95 248.4 V568.4" stroke="#e8e8e8" stroke-width="1"/><path d="M401.2 248.4 V568.4" stroke="#e8e8e8" stroke-width="1"/><path d="M452.45 248.4 V568.4" stroke="#e8e8e8" stroke-width="1"/><path d="M503.7 248.4 V568.4" stroke="#e8e8e8" stroke-width="1"/><path d="M554.95 248.4 V568.4" stroke="#e8e8e8" stroke-width="1"/><path d="M606.2 248.4 V568.4" stroke="#e8e8e8" stroke-width="1"/><path d="M657.45 248.4 V568.4" stroke="#e8e8e8" stroke-width="1"/><path d="M708.7 248.4 V568.4" stroke="#e8e8e8" stroke-width="1"/><path d="M759.95 248.4 V568.4" stroke="#e8e8e8" stroke-width="1"/><path d="M1 264.4 H29.7" stroke="#dcdcdc" stroke-width="1"/><path d="M1 280.4 H29.7" stroke="#dcdcdc" stroke-width="1"/><path d="M1 296.4 H29.7" stroke="#dcdcdc" stroke-width="1"/><path d="M1 312.4 H29.7" stroke="#dcdcdc" stroke-width="1"/><path d="M1 328.4 H29.7" stroke="#dcdcdc" stroke-width="1"/><path d="M1 344.4 H29.7" stroke="#dcdcdc" stroke-width="1"/><path d="M1 360.4 H29.7" stroke="#dcdcdc" stroke-width="1"/><path d="M1 376.4 H29.7" stroke="#dcdcdc" stroke-width="1"/><path d="M1 392.4 H29.7" stroke="#dcdcdc" stroke-width="1"/><path d="M1 408.4 H29.7" stroke="#dcdcdc" stroke-width="1"/><path d="M1 424.4 H29.7" stroke="#dcdcdc" stroke-width="1"/><path d="M1 440.4 H29.7" stroke="#dcdcdc" stroke-width="1"/><path d="M1 456.4 H29.7" stroke="#dcdcdc" stroke-width="1"/><path d="M1 472.4 H29.7" stroke="#dcdcdc" stroke-width="1"/><path d="M1 488.4 H29.7" stroke="#dcdcdc" stroke-width="1"/><path d="M1 504.4 H29.7" stroke="#dcdcdc" stroke-width="1"/><path d="M1 520.4 H29.7" stroke="#dcdcdc" stroke-width="1"/><path d="M1 536.4 H29.7" stroke="#dcdcdc" stroke-width="1"/><path d="M1 552.4 H29.7" stroke="#dcdcdc" stroke-width="1"/><path d="M1 568.4 H29.7" stroke="#dcdcdc" stroke-width="1"/><path d="M29.7 233 V248.4" stroke="#d6d6d6" stroke-width="1"/><path d="M93.7 233 V248.4" stroke="#d6d6d6" stroke-width="1"/><path d="M144.95 233 V248.4" stroke="#d6d6d6" stroke-width="1"/><path d="M196.2 233 V248.4" stroke="#d6d6d6" stroke-width="1"/><path d="M247.45 233 V248.4" stroke="#d6d6d6" stroke-width="1"/><path d="M298.7 233 V248.4" stroke="#d6d6d6" stroke-width="1"/><path d="M349.95 233 V248.4" stroke="#d6d6d6" stroke-width="1"/><path d="M401.2 233 V248.4" stroke="#d6d6d6" stroke-width="1"/><path d="M452.45 233 V248.4" stroke="#d6d6d6" stroke-width="1"/><path d="M503.7 233 V248.4" stroke="#d6d6d6" stroke-width="1"/><path d="M554.95 233 V248.4" stroke="#d6d6d6" stroke-width="1"/><path d="M606.2 233 V248.4" stroke="#d6d6d6" stroke-width="1"/><path d="M657.45 233 V248.4" stroke="#d6d6d6" stroke-width="1"/><path d="M708.7 233 V248.4" stroke="#d6d6d6" stroke-width="1"/><path d="M759.95 233 V248.4" stroke="#d6d6d6" stroke-width="1"/><path d="M1 248.1 H808.6" stroke="#cfcfcf" stroke-width="1"/><path d="M29.4 248.4 V568.4" stroke="#cfcfcf" stroke-width="1"/><rect x="553.75" y="246.9" width="53.05" height="1.7" fill="#0e6b37"/><rect x="28.0" y="407.0" width="2.0" height="18.2" fill="#0e6b37"/><rect x="29.7" y="408.4" width="474.0" height="16.0" fill="#4472c4"/><rect x="30.2" y="424.4" width="473.5" height="16.0" fill="#d9e1f2"/><rect x="30.2" y="440.4" width="473.5" height="16.0" fill="#ffffff"/><rect x="30.2" y="456.4" width="473.5" height="16.0" fill="#d9e1f2"/><rect x="30.2" y="472.4" width="473.5" height="16.0" fill="#ffffff"/><rect x="30.2" y="488.4" width="473.5" height="16.0" fill="#d9e1f2"/><rect x="30.2" y="504.4" width="473.5" height="16.0" fill="#ffffff"/><rect x="30.2" y="520.4" width="473.5" height="16.0" fill="#d9e1f2"/><rect x="30.2" y="536.4" width="473.5" height="16.0" fill="#ffffff"/><rect x="30.2" y="552.4" width="473.5" height="16.0" fill="#d9e1f2"/><rect x="196.2" y="424.4" width="51.25" height="16.0" fill="#88a6d7"/><rect x="196.2" y="440.4" width="51.25" height="16.0" fill="#8fabda"/><rect x="196.2" y="456.4" width="51.25" height="16.0" fill="#a3bae1"/><rect x="196.2" y="472.4" width="51.25" height="16.0" fill="#c6d4ed"/><rect x="196.2" y="488.4" width="51.25" height="16.0" fill="#c0cfeb"/><rect x="196.2" y="504.4" width="51.25" height="16.0" fill="#82a1d5"/><rect x="196.2" y="520.4" width="51.25" height="16.0" fill="#9db6df"/><rect x="196.2" y="536.4" width="51.25" height="16.0" fill="#aec2e5"/><rect x="196.2" y="552.4" width="51.25" height="16.0" fill="#b0c4e5"/><rect x="401.2" y="424.4" width="51.25" height="16.0" fill="#ffc7ce"/><rect x="401.2" y="440.4" width="51.25" height="16.0" fill="#ffc7ce"/><rect x="401.2" y="456.4" width="51.25" height="16.0" fill="#ffc7ce"/><rect x="401.2" y="504.4" width="51.25" height="16.0" fill="#ffc7ce"/><rect x="401.2" y="520.4" width="51.25" height="16.0" fill="#ffc7ce"/><rect x="401.2" y="536.4" width="51.25" height="16.0" fill="#ffc7ce"/><path d="M93.7 424.4 V568.4" stroke="#cfd6e6" stroke-width="1" opacity="0.55"/><path d="M144.95 424.4 V568.4" stroke="#cfd6e6" stroke-width="1" opacity="0.55"/><path d="M196.2 424.4 V568.4" stroke="#cfd6e6" stroke-width="1" opacity="0.55"/><path d="M247.45 424.4 V568.4" stroke="#cfd6e6" stroke-width="1" opacity="0.55"/><path d="M298.7 424.4 V568.4" stroke="#cfd6e6" stroke-width="1" opacity="0.55"/><path d="M349.95 424.4 V568.4" stroke="#cfd6e6" stroke-width="1" opacity="0.55"/><path d="M401.2 424.4 V568.4" stroke="#cfd6e6" stroke-width="1" opacity="0.55"/><path d="M452.45 424.4 V568.4" stroke="#cfd6e6" stroke-width="1" opacity="0.55"/><path d="M29.7 424.4 H503.7" stroke="#9db4e0" stroke-width="1"/><path d="M29.7 440.4 H503.7" stroke="#9db4e0" stroke-width="1"/><path d="M29.7 456.4 H503.7" stroke="#9db4e0" stroke-width="1"/><path d="M29.7 472.4 H503.7" stroke="#9db4e0" stroke-width="1"/><path d="M29.7 488.4 H503.7" stroke="#9db4e0" stroke-width="1"/><path d="M29.7 504.4 H503.7" stroke="#9db4e0" stroke-width="1"/><path d="M29.7 520.4 H503.7" stroke="#9db4e0" stroke-width="1"/><path d="M29.7 536.4 H503.7" stroke="#9db4e0" stroke-width="1"/><path d="M29.7 552.4 H503.7" stroke="#9db4e0" stroke-width="1"/><path d="M29.7 568.4 H503.7" stroke="#9db4e0" stroke-width="1"/><path d="M503.7 408.4 V568.4" stroke="#8ea9db" stroke-width="1"/><defs><linearGradient id="db" x1="0" x2="1" y1="0" y2="0"><stop offset="0" stop-color="#1683ec"/><stop offset="0.35" stop-color="#3b9af2"/><stop offset="1" stop-color="#e9f3fd"/></linearGradient></defs><rect x="249.04999999999998" y="425.7" width="38.6" height="12.5" fill="url(#db)" stroke="#3b97ee" stroke-width="0.8"/><rect x="249.04999999999998" y="441.7" width="25.7" height="12.5" fill="url(#db)" stroke="#3b97ee" stroke-width="0.8"/><rect x="249.04999999999998" y="457.7" width="25.7" height="12.5" fill="url(#db)" stroke="#3b97ee" stroke-width="0.8"/><rect x="249.04999999999998" y="473.7" width="20.3" height="12.5" fill="url(#db)" stroke="#3b97ee" stroke-width="0.8"/><rect x="249.04999999999998" y="489.7" width="19.3" height="12.5" fill="url(#db)" stroke="#3b97ee" stroke-width="0.8"/><rect x="249.04999999999998" y="505.7" width="29.7" height="12.5" fill="url(#db)" stroke="#3b97ee" stroke-width="0.8"/><rect x="249.04999999999998" y="521.6999999999999" width="29.7" height="12.5" fill="url(#db)" stroke="#3b97ee" stroke-width="0.8"/><rect x="249.04999999999998" y="537.6999999999999" width="22.8" height="12.5" fill="url(#db)" stroke="#3b97ee" stroke-width="0.8"/><rect x="249.04999999999998" y="553.6999999999999" width="22.8" height="12.5" fill="url(#db)" stroke="#3b97ee" stroke-width="0.8"/><rect x="554.75" y="407.59999999999997" width="51.45" height="16.8" fill="#fff" stroke="#15703d" stroke-width="1.5"/><rect x="604.6" y="422.59999999999997" width="3.8" height="3.8" fill="#15703d" stroke="#fff" stroke-width="0.7"/></svg>
<svg class="a" style="left:79.6px;top:409.4px;" width="13.4" height="13.2" viewBox="0 0 13.4 13.2"><rect x="0.4" y="0.4" width="12.6" height="12.4" fill="#fdfdfd" stroke="#9c9a97" stroke-width="0.9"/><path d="M3.1 8.3 H6.5 L4.8 10Z" fill="#555"/><path d="M9.3 9.4 V3.6 M8.2 5 L9.3 3.4 L10.4 5" fill="none" stroke="#555" stroke-width="0.8"/></svg>
<svg class="a" style="left:130.85px;top:409.4px;" width="13.4" height="13.2" viewBox="0 0 13.4 13.2"><rect x="0.4" y="0.4" width="12.6" height="12.4" fill="#fdfdfd" stroke="#9c9a97" stroke-width="0.9"/><path d="M3.9 5.4 H9.3 L6.6 8.2Z" fill="#555"/></svg>
<svg class="a" style="left:182.1px;top:409.4px;" width="13.4" height="13.2" viewBox="0 0 13.4 13.2"><rect x="0.4" y="0.4" width="12.6" height="12.4" fill="#fdfdfd" stroke="#9c9a97" stroke-width="0.9"/><path d="M3.9 5.4 H9.3 L6.6 8.2Z" fill="#555"/></svg>
<svg class="a" style="left:233.35px;top:409.4px;" width="13.4" height="13.2" viewBox="0 0 13.4 13.2"><rect x="0.4" y="0.4" width="12.6" height="12.4" fill="#fdfdfd" stroke="#9c9a97" stroke-width="0.9"/><path d="M3.9 5.4 H9.3 L6.6 8.2Z" fill="#555"/></svg>
<svg class="a" style="left:284.6px;top:409.4px;" width="13.4" height="13.2" viewBox="0 0 13.4 13.2"><rect x="0.4" y="0.4" width="12.6" height="12.4" fill="#fdfdfd" stroke="#9c9a97" stroke-width="0.9"/><path d="M3.9 5.4 H9.3 L6.6 8.2Z" fill="#555"/></svg>
<svg class="a" style="left:335.85px;top:409.4px;" width="13.4" height="13.2" viewBox="0 0 13.4 13.2"><rect x="0.4" y="0.4" width="12.6" height="12.4" fill="#fdfdfd" stroke="#9c9a97" stroke-width="0.9"/><path d="M3.9 5.4 H9.3 L6.6 8.2Z" fill="#555"/></svg>
<svg class="a" style="left:387.1px;top:409.4px;" width="13.4" height="13.2" viewBox="0 0 13.4 13.2"><rect x="0.4" y="0.4" width="12.6" height="12.4" fill="#fdfdfd" stroke="#9c9a97" stroke-width="0.9"/><path d="M3.9 5.4 H9.3 L6.6 8.2Z" fill="#555"/></svg>
<svg class="a" style="left:438.35px;top:409.4px;" width="13.4" height="13.2" viewBox="0 0 13.4 13.2"><rect x="0.4" y="0.4" width="12.6" height="12.4" fill="#fdfdfd" stroke="#9c9a97" stroke-width="0.9"/><path d="M3.9 5.4 H9.3 L6.6 8.2Z" fill="#555"/></svg>
<svg class="a" style="left:489.6px;top:409.4px;" width="13.4" height="13.2" viewBox="0 0 13.4 13.2"><rect x="0.4" y="0.4" width="12.6" height="12.4" fill="#fdfdfd" stroke="#9c9a97" stroke-width="0.9"/><path d="M3.9 5.4 H9.3 L6.6 8.2Z" fill="#555"/></svg>
<span class="t" style="left:58.10px;top:230px;font-size:10.8px;color:#5a5a5a;">A</span>
<span class="t" style="left:115.72px;top:230px;font-size:10.8px;color:#5a5a5a;">B</span>
<span class="t" style="left:166.68px;top:230px;font-size:10.8px;color:#5a5a5a;">C</span>
<span class="t" style="left:217.93px;top:230px;font-size:10.8px;color:#5a5a5a;">D</span>
<span class="t" style="left:269.47px;top:230px;font-size:10.8px;color:#5a5a5a;">E</span>
<span class="t" style="left:321.03px;top:230px;font-size:10.8px;color:#5a5a5a;">F</span>
<span class="t" style="left:371.37px;top:230px;font-size:10.8px;color:#5a5a5a;">G</span>
<span class="t" style="left:422.93px;top:230px;font-size:10.8px;color:#5a5a5a;">H</span>
<span class="t" style="left:476.57px;top:230px;font-size:10.8px;color:#5a5a5a;">I</span>
<span class="t" style="left:526.62px;top:230px;font-size:10.8px;color:#5a5a5a;">J</span>
<span class="t" style="left:576.68px;top:230px;font-size:10.8px;color:#107c41;font-weight:bold;">K</span>
<span class="t" style="left:628.82px;top:230px;font-size:10.8px;color:#5a5a5a;">L</span>
<span class="t" style="left:678.58px;top:230px;font-size:10.8px;color:#5a5a5a;">M</span>
<span class="t" style="left:730.43px;top:230px;font-size:10.8px;color:#5a5a5a;">N</span>
<span class="t" style="left:781.27px;top:230px;font-size:10.8px;color:#5a5a5a;">O</span>
<span class="t" style="left:12.00px;top:246px;font-size:10.8px;color:#666;">1</span>
<span class="t" style="left:12.00px;top:262px;font-size:10.8px;color:#666;">2</span>
<span class="t" style="left:12.00px;top:278px;font-size:10.8px;color:#666;">3</span>
<span class="t" style="left:12.00px;top:294px;font-size:10.8px;color:#666;">4</span>
<span class="t" style="left:12.00px;top:310px;font-size:10.8px;color:#666;">5</span>
<span class="t" style="left:12.00px;top:326px;font-size:10.8px;color:#666;">6</span>
<span class="t" style="left:12.00px;top:342px;font-size:10.8px;color:#666;">7</span>
<span class="t" style="left:12.00px;top:358px;font-size:10.8px;color:#666;">8</span>
<span class="t" style="left:12.00px;top:374px;font-size:10.8px;color:#666;">9</span>
<span class="t" style="left:8.99px;top:390px;font-size:10.8px;color:#666;">10</span>
<span class="t" style="left:9.29px;top:406px;font-size:10.8px;color:#107c41;font-weight:bold;">11</span>
<span class="t" style="left:8.99px;top:422px;font-size:10.8px;color:#666;">12</span>
<span class="t" style="left:8.99px;top:438px;font-size:10.8px;color:#666;">13</span>
<span class="t" style="left:8.99px;top:454px;font-size:10.8px;color:#666;">14</span>
<span class="t" style="left:8.99px;top:470px;font-size:10.8px;color:#666;">15</span>
<span class="t" style="left:8.99px;top:486px;font-size:10.8px;color:#666;">16</span>
<span class="t" style="left:8.99px;top:502px;font-size:10.8px;color:#666;">17</span>
<span class="t" style="left:8.99px;top:518px;font-size:10.8px;color:#666;">18</span>
<span class="t" style="left:8.99px;top:534px;font-size:10.8px;color:#666;">19</span>
<span class="t" style="left:8.99px;top:550px;font-size:10.8px;color:#666;">20</span>
<div class="a" style="left:31.5px;top:408px;width:48.5px;height:17px;overflow:hidden;">
<span class="t" style="left:0.00px;top:0px;font-size:10.25px;color:#fff;font-weight:bold;">Date</span>
</div>
<div class="a" style="left:95.8px;top:408px;width:35.5px;height:17px;overflow:hidden;">
<span class="t" style="left:0.00px;top:-1px;font-size:10.55px;color:#fff;font-weight:bold;letter-spacing:-0.007px;">Month</span>
</div>
<div class="a" style="left:147.3px;top:408px;width:35.2px;height:17px;overflow:hidden;">
<span class="t" style="left:0.00px;top:0px;font-size:10.15px;color:#fff;font-weight:bold;letter-spacing:-0.373px;">Day</span>
</div>
<div class="a" style="left:198.6px;top:408px;width:35.2px;height:17px;overflow:hidden;">
<span class="t" style="left:0.00px;top:0px;font-size:10.2px;color:#fff;font-weight:bold;">Temperature</span>
</div>
<div class="a" style="left:249.5px;top:408px;width:35.5px;height:17px;overflow:hidden;">
<span class="t" style="left:0.00px;top:0px;font-size:10.15px;color:#fff;font-weight:bold;letter-spacing:-0.145px;">Rainfall</span>
</div>
<div class="a" style="left:301.2px;top:408px;width:35.1px;height:17px;overflow:hidden;">
<span class="t" style="left:0.00px;top:0px;font-size:10.15px;color:#fff;font-weight:bold;letter-spacing:-0.484px;">Flyers</span>
</div>
<div class="a" style="left:352.4px;top:408px;width:35.1px;height:17px;overflow:hidden;">
<span class="t" style="left:0.00px;top:0px;font-size:10.15px;color:#fff;font-weight:bold;letter-spacing:-0.406px;">Price</span>
</div>
<div class="a" style="left:403.2px;top:408px;width:35.6px;height:17px;overflow:hidden;">
<span class="t" style="left:0.00px;top:0px;font-size:10.15px;color:#fff;font-weight:bold;letter-spacing:-0.625px;">Sales</span>
</div>
<div class="a" style="left:457.8px;top:408px;width:32.2px;height:17px;overflow:hidden;">
<span class="t" style="left:0.00px;top:0px;font-size:10.15px;color:#fff;font-weight:bold;letter-spacing:-0.401px;">Revenue</span>
</div>
<span class="t" style="left:35.20px;top:423px;font-size:11.25px;color:#1c1c1c;">01/01/2017</span>
<span class="t" style="left:95.70px;top:424px;font-size:10.25px;color:#1c1c1c;">January</span>
<div class="a" style="left:146.9px;top:424px;width:49.2px;height:17px;overflow:hidden;">
<span class="t" style="left:0.00px;top:0px;font-size:10.15px;color:#1c1c1c;letter-spacing:0.013px;">Sunday</span>
</div>
<span class="t" style="left:233.55px;top:423px;font-size:10.7px;color:#1c1c1c;">27</span>
<span class="t" style="left:275.79px;top:423px;font-size:10.7px;color:#1c1c1c;">2.00</span>
<span class="t" style="left:336.25px;top:423px;font-size:10.7px;color:#1c1c1c;">15</span>
<span class="t" style="left:383.94px;top:423px;font-size:10.7px;color:#1c1c1c;">0.3</span>
<span class="t" style="left:438.35px;top:423px;font-size:10.7px;color:#9c0006;">10</span>
<span class="t" style="left:457.45px;top:423px;font-size:10.6px;color:#1c1c1c;">$</span>
<span class="t" style="left:476.19px;top:423px;font-size:10.7px;color:#1c1c1c;">3.00</span>
<span class="t" style="left:592.10px;top:423px;font-size:10.7px;color:#1c1c1c;">22</span>
<span class="t" style="left:35.20px;top:439px;font-size:11.25px;color:#1c1c1c;">02/01/2017</span>
<span class="t" style="left:95.70px;top:440px;font-size:10.25px;color:#1c1c1c;">January</span>
<div class="a" style="left:146.9px;top:440px;width:49.2px;height:17px;overflow:hidden;">
<span class="t" style="left:0.00px;top:-1px;font-size:10.55px;color:#1c1c1c;letter-spacing:-0.006px;">Monday</span>
</div>
<span class="t" style="left:224.64px;top:439px;font-size:10.7px;color:#1c1c1c;">28.9</span>
<span class="t" style="left:275.79px;top:439px;font-size:10.7px;color:#1c1c1c;">1.33</span>
<span class="t" style="left:336.25px;top:439px;font-size:10.7px;color:#1c1c1c;">15</span>
<span class="t" style="left:383.94px;top:439px;font-size:10.7px;color:#1c1c1c;">0.3</span>
<span class="t" style="left:438.35px;top:439px;font-size:10.7px;color:#9c0006;">13</span>
<span class="t" style="left:457.45px;top:439px;font-size:10.6px;color:#1c1c1c;">$</span>
<span class="t" style="left:476.19px;top:439px;font-size:10.7px;color:#1c1c1c;">3.90</span>
<span class="t" style="left:592.10px;top:439px;font-size:10.7px;color:#1c1c1c;">22</span>
<span class="t" style="left:35.20px;top:455px;font-size:11.25px;color:#1c1c1c;">03/01/2017</span>
<span class="t" style="left:95.70px;top:456px;font-size:10.25px;color:#1c1c1c;">January</span>
<div class="a" style="left:146.9px;top:456px;width:49.2px;height:17px;overflow:hidden;">
<span class="t" style="left:0.00px;top:0px;font-size:10.15px;color:#1c1c1c;letter-spacing:-0.008px;">Tuesday</span>
</div>
<span class="t" style="left:224.64px;top:455px;font-size:10.7px;color:#1c1c1c;">34.5</span>
<span class="t" style="left:275.79px;top:455px;font-size:10.7px;color:#1c1c1c;">1.33</span>
<span class="t" style="left:336.25px;top:455px;font-size:10.7px;color:#1c1c1c;">27</span>
<span class="t" style="left:383.94px;top:455px;font-size:10.7px;color:#1c1c1c;">0.3</span>
<span class="t" style="left:438.35px;top:455px;font-size:10.7px;color:#9c0006;">15</span>
<span class="t" style="left:457.45px;top:455px;font-size:10.6px;color:#1c1c1c;">$</span>
<span class="t" style="left:476.19px;top:455px;font-size:10.7px;color:#1c1c1c;">4.50</span>
<span class="t" style="left:592.10px;top:455px;font-size:10.7px;color:#1c1c1c;">22</span>
<span class="t" style="left:35.20px;top:471px;font-size:11.25px;color:#1c1c1c;">04/01/2017</span>
<span class="t" style="left:95.70px;top:472px;font-size:10.25px;color:#1c1c1c;">January</span>
<div class="a" style="left:146.9px;top:472px;width:49.2px;height:17px;overflow:hidden;">
<span class="t" style="left:0.00px;top:0px;font-size:10.4px;color:#1c1c1c;">Wednesda</span>
</div>
<span class="t" style="left:224.64px;top:471px;font-size:10.7px;color:#1c1c1c;">44.1</span>
<span class="t" style="left:275.79px;top:471px;font-size:10.7px;color:#1c1c1c;">1.05</span>
<span class="t" style="left:336.25px;top:471px;font-size:10.7px;color:#1c1c1c;">28</span>
<span class="t" style="left:383.94px;top:471px;font-size:10.7px;color:#1c1c1c;">0.3</span>
<span class="t" style="left:438.35px;top:471px;font-size:10.7px;color:#1c1c1c;">17</span>
<span class="t" style="left:457.45px;top:471px;font-size:10.6px;color:#1c1c1c;">$</span>
<span class="t" style="left:476.19px;top:471px;font-size:10.7px;color:#1c1c1c;">5.10</span>
<span class="t" style="left:592.10px;top:471px;font-size:10.7px;color:#1c1c1c;">23</span>
<span class="t" style="left:35.20px;top:487px;font-size:11.25px;color:#1c1c1c;">05/01/2017</span>
<span class="t" style="left:95.70px;top:488px;font-size:10.25px;color:#1c1c1c;">January</span>
<div class="a" style="left:146.9px;top:488px;width:49.2px;height:17px;overflow:hidden;">
<span class="t" style="left:0.00px;top:0px;font-size:10.3px;color:#1c1c1c;letter-spacing:0.008px;">Thursday</span>
</div>
<span class="t" style="left:224.64px;top:487px;font-size:10.7px;color:#1c1c1c;">42.4</span>
<span class="t" style="left:275.79px;top:487px;font-size:10.7px;color:#1c1c1c;">1.00</span>
<span class="t" style="left:336.25px;top:487px;font-size:10.7px;color:#1c1c1c;">33</span>
<span class="t" style="left:383.94px;top:487px;font-size:10.7px;color:#1c1c1c;">0.3</span>
<span class="t" style="left:438.35px;top:487px;font-size:10.7px;color:#1c1c1c;">18</span>
<span class="t" style="left:457.45px;top:487px;font-size:10.6px;color:#1c1c1c;">$</span>
<span class="t" style="left:476.19px;top:487px;font-size:10.7px;color:#1c1c1c;">5.40</span>
<span class="t" style="left:592.10px;top:487px;font-size:10.7px;color:#1c1c1c;">25</span>
<span class="t" style="left:35.20px;top:503px;font-size:11.25px;color:#1c1c1c;">06/01/2017</span>
<span class="t" style="left:95.70px;top:504px;font-size:10.25px;color:#1c1c1c;">January</span>
<div class="a" style="left:146.9px;top:504px;width:49.2px;height:17px;overflow:hidden;">
<span class="t" style="left:0.00px;top:0px;font-size:10.25px;color:#1c1c1c;">Friday</span>
</div>
<span class="t" style="left:224.64px;top:503px;font-size:10.7px;color:#1c1c1c;">25.3</span>
<span class="t" style="left:275.79px;top:503px;font-size:10.7px;color:#1c1c1c;">1.54</span>
<span class="t" style="left:336.25px;top:503px;font-size:10.7px;color:#1c1c1c;">23</span>
<span class="t" style="left:383.94px;top:503px;font-size:10.7px;color:#1c1c1c;">0.3</span>
<span class="t" style="left:438.35px;top:503px;font-size:11.45px;color:#9c0006;letter-spacing:0.007px;">11</span>
<span class="t" style="left:457.45px;top:503px;font-size:10.6px;color:#1c1c1c;">$</span>
<span class="t" style="left:476.19px;top:503px;font-size:10.7px;color:#1c1c1c;">3.30</span>
<span class="t" style="left:592.10px;top:503px;font-size:10.7px;color:#1c1c1c;">25</span>
<span class="t" style="left:35.20px;top:519px;font-size:11.25px;color:#1c1c1c;">07/01/2017</span>
<span class="t" style="left:95.70px;top:520px;font-size:10.25px;color:#1c1c1c;">January</span>
<div class="a" style="left:146.9px;top:520px;width:49.2px;height:17px;overflow:hidden;">
<span class="t" style="left:0.00px;top:-1px;font-size:10.5px;color:#1c1c1c;">Saturday</span>
</div>
<span class="t" style="left:224.64px;top:519px;font-size:10.7px;color:#1c1c1c;">32.9</span>
<span class="t" style="left:275.79px;top:519px;font-size:10.7px;color:#1c1c1c;">1.54</span>
<span class="t" style="left:336.25px;top:519px;font-size:10.7px;color:#1c1c1c;">19</span>
<span class="t" style="left:383.94px;top:519px;font-size:10.7px;color:#1c1c1c;">0.3</span>
<span class="t" style="left:438.35px;top:519px;font-size:10.7px;color:#9c0006;">13</span>
<span class="t" style="left:457.45px;top:519px;font-size:10.6px;color:#1c1c1c;">$</span>
<span class="t" style="left:476.19px;top:519px;font-size:10.7px;color:#1c1c1c;">3.90</span>
<span class="t" style="left:592.10px;top:519px;font-size:10.7px;color:#1c1c1c;">23</span>
<span class="t" style="left:35.20px;top:535px;font-size:11.25px;color:#1c1c1c;">08/01/2017</span>
<span class="t" style="left:95.70px;top:536px;font-size:10.25px;color:#1c1c1c;">January</span>
<div class="a" style="left:146.9px;top:536px;width:49.2px;height:17px;overflow:hidden;">
<span class="t" style="left:0.00px;top:0px;font-size:10.15px;color:#1c1c1c;letter-spacing:0.013px;">Sunday</span>
</div>
<span class="t" style="left:224.64px;top:535px;font-size:10.7px;color:#1c1c1c;">37.5</span>
<span class="t" style="left:275.79px;top:535px;font-size:10.7px;color:#1c1c1c;">1.18</span>
<span class="t" style="left:336.25px;top:535px;font-size:10.7px;color:#1c1c1c;">28</span>
<span class="t" style="left:383.94px;top:535px;font-size:10.7px;color:#1c1c1c;">0.3</span>
<span class="t" style="left:438.35px;top:535px;font-size:10.7px;color:#9c0006;">15</span>
<span class="t" style="left:457.45px;top:535px;font-size:10.6px;color:#1c1c1c;">$</span>
<span class="t" style="left:476.19px;top:535px;font-size:10.7px;color:#1c1c1c;">4.50</span>
<span class="t" style="left:592.10px;top:535px;font-size:10.7px;color:#1c1c1c;">25</span>
<span class="t" style="left:35.20px;top:551px;font-size:11.25px;color:#1c1c1c;">09/01/2017</span>
<span class="t" style="left:95.70px;top:552px;font-size:10.25px;color:#1c1c1c;">January</span>
<div class="a" style="left:146.9px;top:552px;width:49.2px;height:17px;overflow:hidden;">
<span class="t" style="left:0.00px;top:-1px;font-size:10.55px;color:#1c1c1c;letter-spacing:-0.006px;">Monday</span>
</div>
<span class="t" style="left:224.64px;top:551px;font-size:10.7px;color:#1c1c1c;">38.1</span>
<span class="t" style="left:275.79px;top:551px;font-size:10.7px;color:#1c1c1c;">1.18</span>
<span class="t" style="left:336.25px;top:551px;font-size:10.7px;color:#1c1c1c;">20</span>
<span class="t" style="left:383.94px;top:551px;font-size:10.7px;color:#1c1c1c;">0.3</span>
<span class="t" style="left:438.35px;top:551px;font-size:10.7px;color:#1c1c1c;">17</span>
<span class="t" style="left:457.45px;top:551px;font-size:10.6px;color:#1c1c1c;">$</span>
<span class="t" style="left:476.19px;top:551px;font-size:10.7px;color:#1c1c1c;">5.10</span>
<span class="t" style="left:592.10px;top:551px;font-size:10.7px;color:#1c1c1c;">23</span>
<span class="t" style="left:556.85px;top:408px;font-size:10.25px;color:#1c1c1c;letter-spacing:-0.009px;">Sample</span>
<div class="a" style="left:808.6px;top:248px;width:11.4px;height:321px;background:#e1e1e1;"></div>
<div class="a" style="left:808.6px;top:248.6px;width:11.4px;height:12.6px;background:#fff;border:1px solid #c6c6c6;"></div>
<svg class="a" style="left:811.6px;top:252.4px;" width="6" height="4" viewBox="0 0 6 4"><path d="M0 3.6 L3 0.4 L6 3.6Z" fill="#666"/></svg>
<div class="a" style="left:808.6px;top:261.2px;width:11.4px;height:16px;background:#fff;border:1px solid #c6c6c6;border-top:none;"></div>
<div class="a" style="left:808.6px;top:556px;width:11.4px;height:12.6px;background:#fff;border:1px solid #c6c6c6;"></div>
<svg class="a" style="left:811.6px;top:560.6px;" width="6" height="4" viewBox="0 0 6 4"><path d="M0 0.4 L3 3.6 L6 0.4Z" fill="#666"/></svg>
<div class="a" style="left:1px;top:569px;width:819px;height:13px;background:#f3f3f3;"></div>
<div class="a" style="left:30px;top:570px;width:777.4px;height:10.4px;background:#e1e1e1;"></div>
<div class="a" style="left:30px;top:570px;width:13.6px;height:10.4px;background:#fff;border:1px solid #c6c6c6;"></div>
<svg class="a" style="left:34px;top:572.4px;" width="4" height="6" viewBox="0 0 4 6"><path d="M3.6 0 L0.4 3 L3.6 6Z" fill="#555"/></svg>
<div class="a" style="left:43.6px;top:570px;width:376.4px;height:10.4px;background:#fff;border:1px solid #c6c6c6;border-left:none;"></div>
<div class="a" style="left:794.8px;top:570px;width:12.6px;height:10.4px;background:#fff;border:1px solid #c6c6c6;"></div>
<svg class="a" style="left:799.4px;top:572.4px;" width="4" height="6" viewBox="0 0 4 6"><path d="M0.4 0 L3.6 3 L0.4 6Z" fill="#555"/></svg>
<div class="a" style="left:1px;top:582px;width:819px;height:25px;background:#f3f2f1;"></div>
<svg class="a" style="left:11px;top:589.5px;" width="6" height="9" viewBox="0 0 6 9"><path d="M5 0.5 L1 4.5 L5 8.5" fill="none" stroke="#c8c6c4" stroke-width="1.1"/></svg>
<svg class="a" style="left:36px;top:589.5px;" width="6" height="9" viewBox="0 0 6 9"><path d="M1 0.5 L5 4.5 L1 8.5" fill="none" stroke="#c8c6c4" stroke-width="1.1"/></svg>
<svg class="a" style="left:60px;top:589px;" width="11" height="10" viewBox="0 0 11 10"><path d="M0 1 H10.6 M0 4.8 H10.6 M0 8.6 H10.6" stroke="#555" stroke-width="1.2"/></svg>
<span class="t" style="left:86.00px;top:584px;font-size:10.55px;color:#4a4a4a;letter-spacing:0.010px;">Sheet1</span>
<span class="t" style="left:136.00px;top:584px;font-size:10.55px;color:#4a4a4a;letter-spacing:0.010px;">Sheet5</span>
<span class="t" style="left:186.50px;top:584px;font-size:10.55px;color:#4a4a4a;letter-spacing:0.010px;">Sheet4</span>
<span class="t" style="left:237.00px;top:584px;font-size:10.55px;color:#4a4a4a;letter-spacing:0.010px;">Sheet3</span>
<span class="t" style="left:287.00px;top:584px;font-size:10.75px;color:#4a4a4a;letter-spacing:-0.012px;">Sheet2</span>
<span class="t" style="left:337.50px;top:584px;font-size:10.55px;color:#4a4a4a;letter-spacing:0.010px;">Sheet7</span>
<span class="t" style="left:388.00px;top:584px;font-size:10.75px;color:#4a4a4a;letter-spacing:-0.012px;">Sheet8</span>
<span class="t" style="left:439.00px;top:584px;font-size:11px;color:#4a4a4a;">Lemonade</span>
<span class="t" style="left:507.50px;top:584px;font-size:10.65px;color:#2b2b2b;font-weight:bold;letter-spacing:0.013px;">Sheet9</span>
<span class="t" style="left:558.50px;top:584px;font-size:10.55px;color:#4a4a4a;letter-spacing:0.010px;">Sheet6</span>
<div class="a" style="left:507px;top:604px;width:36px;height:2.2px;background:#107c41;"></div>
<svg class="a" style="left:607.5px;top:588.5px;" width="10" height="10" viewBox="0 0 10 10"><path d="M5 0 V10 M0 5 H10" stroke="#444" stroke-width="1.1"/></svg>
<div class="a" style="left:1px;top:607px;width:819px;height:18px;background:#fafafa;"></div>
<div class="a" style="left:1px;top:607px;width:819px;height:1px;background:#e1dfdd;"></div>
<span class="t" style="left:12.00px;top:609px;font-size:9.65px;color:#555;letter-spacing:0.007px;">Calculation Mode: Automatic</span>
<span class="t" style="left:149.00px;top:609px;font-size:9.55px;color:#555;letter-spacing:-0.009px;">Workbook Statistics</span>
<svg class="a" style="left:565.5px;top:617px;" width="5" height="3.2" viewBox="0 0 5 3.2"><path d="M0.4 0.4 L2.5 2.6 L4.6 0.4" fill="none" stroke="#444" stroke-width="0.9"/></svg>
<span class="t" style="left:603.50px;top:609px;font-size:9.5px;color:#555;">Give Feedback to Microsoft</span>
<svg class="a" style="left:753px;top:617.2px;" width="9" height="1" viewBox="0 0 9 1"><path d="M0 0.5 H9" stroke="#444" stroke-width="1.1"/></svg>
<span class="t" style="left:770.00px;top:609px;font-size:8.8px;color:#555;">100%</span>
<svg class="a" style="left:798px;top:613px;" width="9" height="9" viewBox="0 0 9 9"><path d="M4.5 0 V9 M0 4.5 H9" stroke="#444" stroke-width="1.1"/></svg>
<div class="a" style="left:0px;top:0px;width:821px;height:1px;background:#6f6f6f;"></div>
<div class="a" style="left:0px;top:625px;width:821px;height:1px;background:#6f6f6f;"></div>
<div class="a" style="left:0px;top:0px;width:1px;height:626px;background:#6f6f6f;"></div>
<div class="a" style="left:820px;top:0px;width:1px;height:626px;background:#6f6f6f;"></div>
</div></body></html>
